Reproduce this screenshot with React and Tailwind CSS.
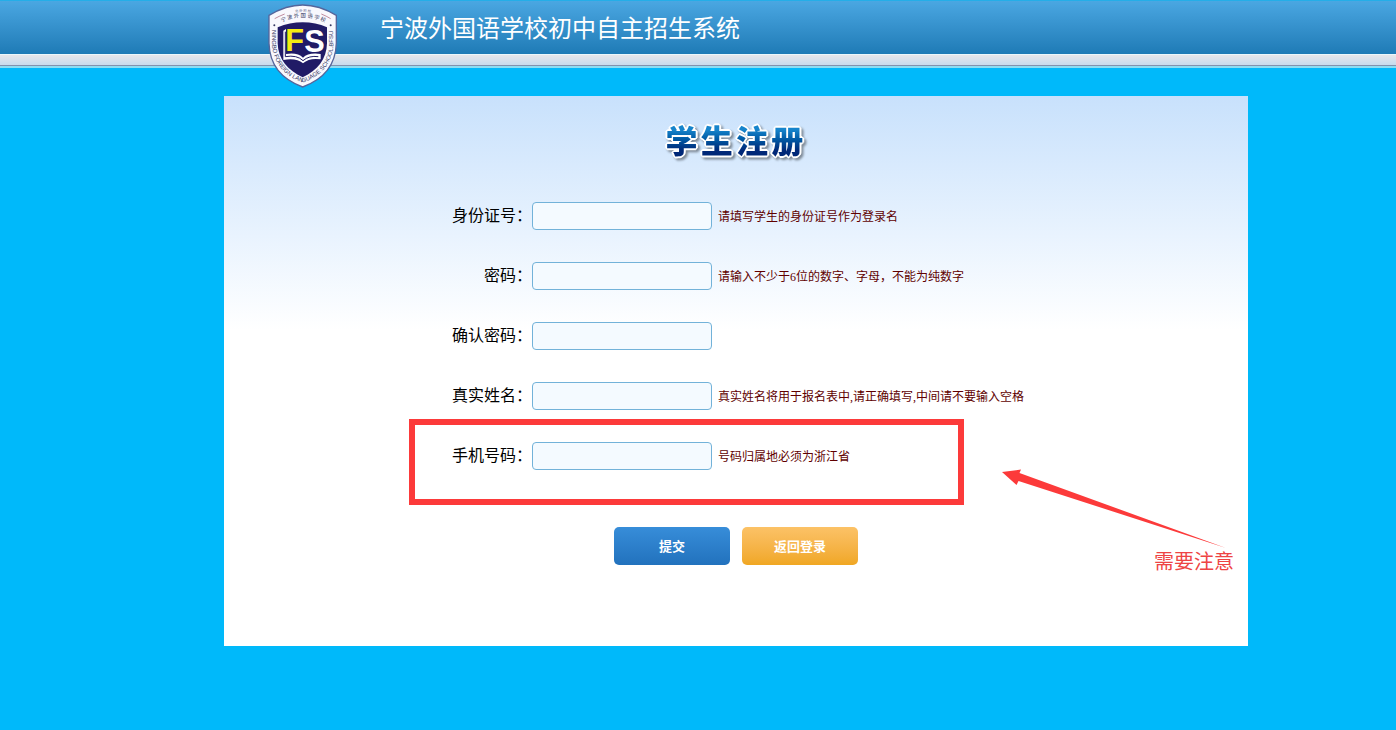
import React from "react";

const fields = [
  { id: "idcard", label: "身份证号：", type: "text", hint: "请填写学生的身份证号作为登录名" },
  { id: "password", label: "密码：", type: "password", hint: "请输入不少于6位的数字、字母，不能为纯数字" },
  { id: "confirm", label: "确认密码：", type: "password", hint: "" },
  { id: "realname", label: "真实姓名：", type: "text", hint: "真实姓名将用于报名表中,请正确填写,中间请不要输入空格" },
  { id: "mobile", label: "手机号码：", type: "tel", hint: "号码归属地必须为浙江省", marked: true },
];

function SchoolLogo() {
  return (
    <svg
      className="absolute left-0 top-[3px] h-[84px] w-[70px]"
      viewBox="0 0 210 252"
      role="img"
      aria-label="宁波外国语学校"
    >
      <defs>
        <path id="ring" d="M12 78 V118 C14 180 53 217 104 236 C158 217 194 180 196 118 V50" />
        <path id="arch" d="M28 62 Q103 18 184 62" />
        <path id="archTop" d="M60 32 Q104 15 150 32" />
      </defs>
      <path
        d="M3 34 Q55 3 104 3 Q153 3 205 34 V118 C203 186 162 228 104 249 C46 228 5 186 3 118 Z"
        fill="#f8f8fd"
        stroke="#54659b"
        strokeWidth="4"
      />
      <path
        d="M29 70 Q65 55 104 55 Q143 55 177 70 V118 C176 166 148 200 104 220 C60 200 30 166 29 118 Z"
        fill="#211b66"
      />
      <path d="M46 80 L54 75 V150 Q88 144 105 161 Q121 145 158 150 V166 Q124 161 105 178 Q85 161 46 168 Z" fill="#fff" />
      <path d="M52 83 V158 Q87 152 105 170 Q123 154 151 158" fill="none" stroke="#211b66" strokeWidth="3" />
      <text x="52" y="141" fill="#f5ec12" className="font-['Liberation_Sans',sans-serif] text-[92px] font-bold">
        F
      </text>
      <text x="109" y="144" fill="#fff" className="font-['Liberation_Sans',sans-serif] text-[92px] font-bold">
        S
      </text>
      <path d="M20 44 Q32 37 50 30 M160 30 Q175 36 188 44" fill="none" stroke="#a4566f" strokeWidth="2" />
      <circle cx="19" cy="64" r="3" fill="#353963" />
      <circle cx="188" cy="64" r="3" fill="#353963" />
      <text fill="#33365f" className="font-['Noto_Sans_CJK_SC',sans-serif] text-base">
        <textPath href="#arch" startOffset="50%" textAnchor="middle">宁 波 外 国 语 学 校</textPath>
      </text>
      <text fill="#5a5d80" className="font-['Noto_Sans_CJK_SC',sans-serif] text-[10px]">
        <textPath href="#archTop" startOffset="50%" textAnchor="middle">北 外 附 校</textPath>
      </text>
      <text fill="#33365f" className="font-['Liberation_Sans',sans-serif] text-lg">
        <textPath href="#ring">NINGBO FOREIGN LANGUAGE SCHOOL.BFSU</textPath>
      </text>
    </svg>
  );
}

function Header() {
  return (
    <header>
      <div className="h-[54px] border-t border-[#24aee8] bg-linear-to-b from-[#4aa7e2] to-[#1e7bb6] pl-[76px]">
        <div className="relative mx-auto max-w-[936px]">
          <SchoolLogo />
          <h1 className="pl-[112px] pt-2 text-2xl leading-9 text-white">宁波外国语学校初中自主招生系统</h1>
        </div>
      </div>
      <div className="h-[11px] border-t border-[#eaf7fc] bg-linear-to-b from-[#e6e6ea] to-[#c6dbee]" />
      <div className="h-[3px] border-t border-[#8291ad] bg-[#8cdcf3]" />
    </header>
  );
}

function Field({ field }) {
  return (
    <div className="relative flex h-7 items-center">
      {field.marked && (
        <div className="pointer-events-none absolute -top-[23px] left-[185px] h-[86px] w-[555px] border-[6px] border-[#fc3a3a]" />
      )}
      <label htmlFor={field.id} className="w-[308px] shrink-0 pb-1 text-right text-base leading-6 text-black">
        {field.label}
      </label>
      <input
        id={field.id}
        name={field.id}
        type={field.type}
        aria-describedby={field.hint ? field.id + "-hint" : undefined}
        className="h-7 w-[180px] shrink-0 rounded border border-[#72b2d9] bg-[#f4faff] px-2 text-sm outline-none"
      />
      {field.hint && (
        <span
          id={field.id + "-hint"}
          className="pl-[6px] pt-0.5 font-['Liberation_Serif','Noto_Sans_CJK_SC',serif] text-xs leading-6 text-[#600000]"
        >
          {field.hint}
        </span>
      )}
    </div>
  );
}

function Note() {
  return (
    <div className="pointer-events-none absolute right-[14px] top-[373px] flex w-[232px] flex-col">
      <svg className="h-20 w-[226px]" viewBox="0 0 226 80" aria-hidden="true">
        <path d="M0 3 L19 0.5 L17.5 4 L224 79 L16.5 12 L14.5 16 Z" fill="#fc3a3a" />
      </svg>
      <p className="text-right text-xl leading-6 text-[#ee4444]">需要注意</p>
    </div>
  );
}

export default function App() {
  return (
    <div className="min-h-screen bg-[#00b9fa] font-['Noto_Sans_CJK_SC',sans-serif]">
      <Header />
      <main className="pl-[76px] pt-7">
        <section className="relative mx-auto max-w-[1024px] bg-white bg-linear-to-b from-[#c8e1fc] to-white to-[234px] pb-[81px] pt-5">
          <h2 className="mx-auto w-fit bg-linear-to-b from-[#1684cb] from-30% to-[#002878] to-75% bg-clip-text text-[32px] font-black leading-[46px] tracking-widest text-transparent [filter:drop-shadow(1px_1px_0_white)_drop-shadow(-1px_-1px_0_white)_drop-shadow(1px_-1px_0_white)_drop-shadow(-1px_1px_0_white)_drop-shadow(2px_2px_1px_#7f8b98)]">
            学生注册
          </h2>
          <form className="pt-10" onSubmit={(e) => e.preventDefault()}>
            <div className="flex flex-col gap-8">
              {fields.map((f) => (
                <Field key={f.id} field={f} />
              ))}
            </div>
            <div className="flex justify-center gap-3 pt-[57px] text-[13px] font-bold text-white">
              <button type="submit" className="h-[38px] w-[116px] rounded-[5px] bg-linear-to-b from-[#378dd9] to-[#2272bd]">
                提交
              </button>
              <button type="button" className="h-[38px] w-[116px] rounded-[5px] bg-linear-to-b from-[#fcc266] to-[#f0a722]">
                返回登录
              </button>
            </div>
          </form>
          <Note />
        </section>
      </main>
    </div>
  );
}
